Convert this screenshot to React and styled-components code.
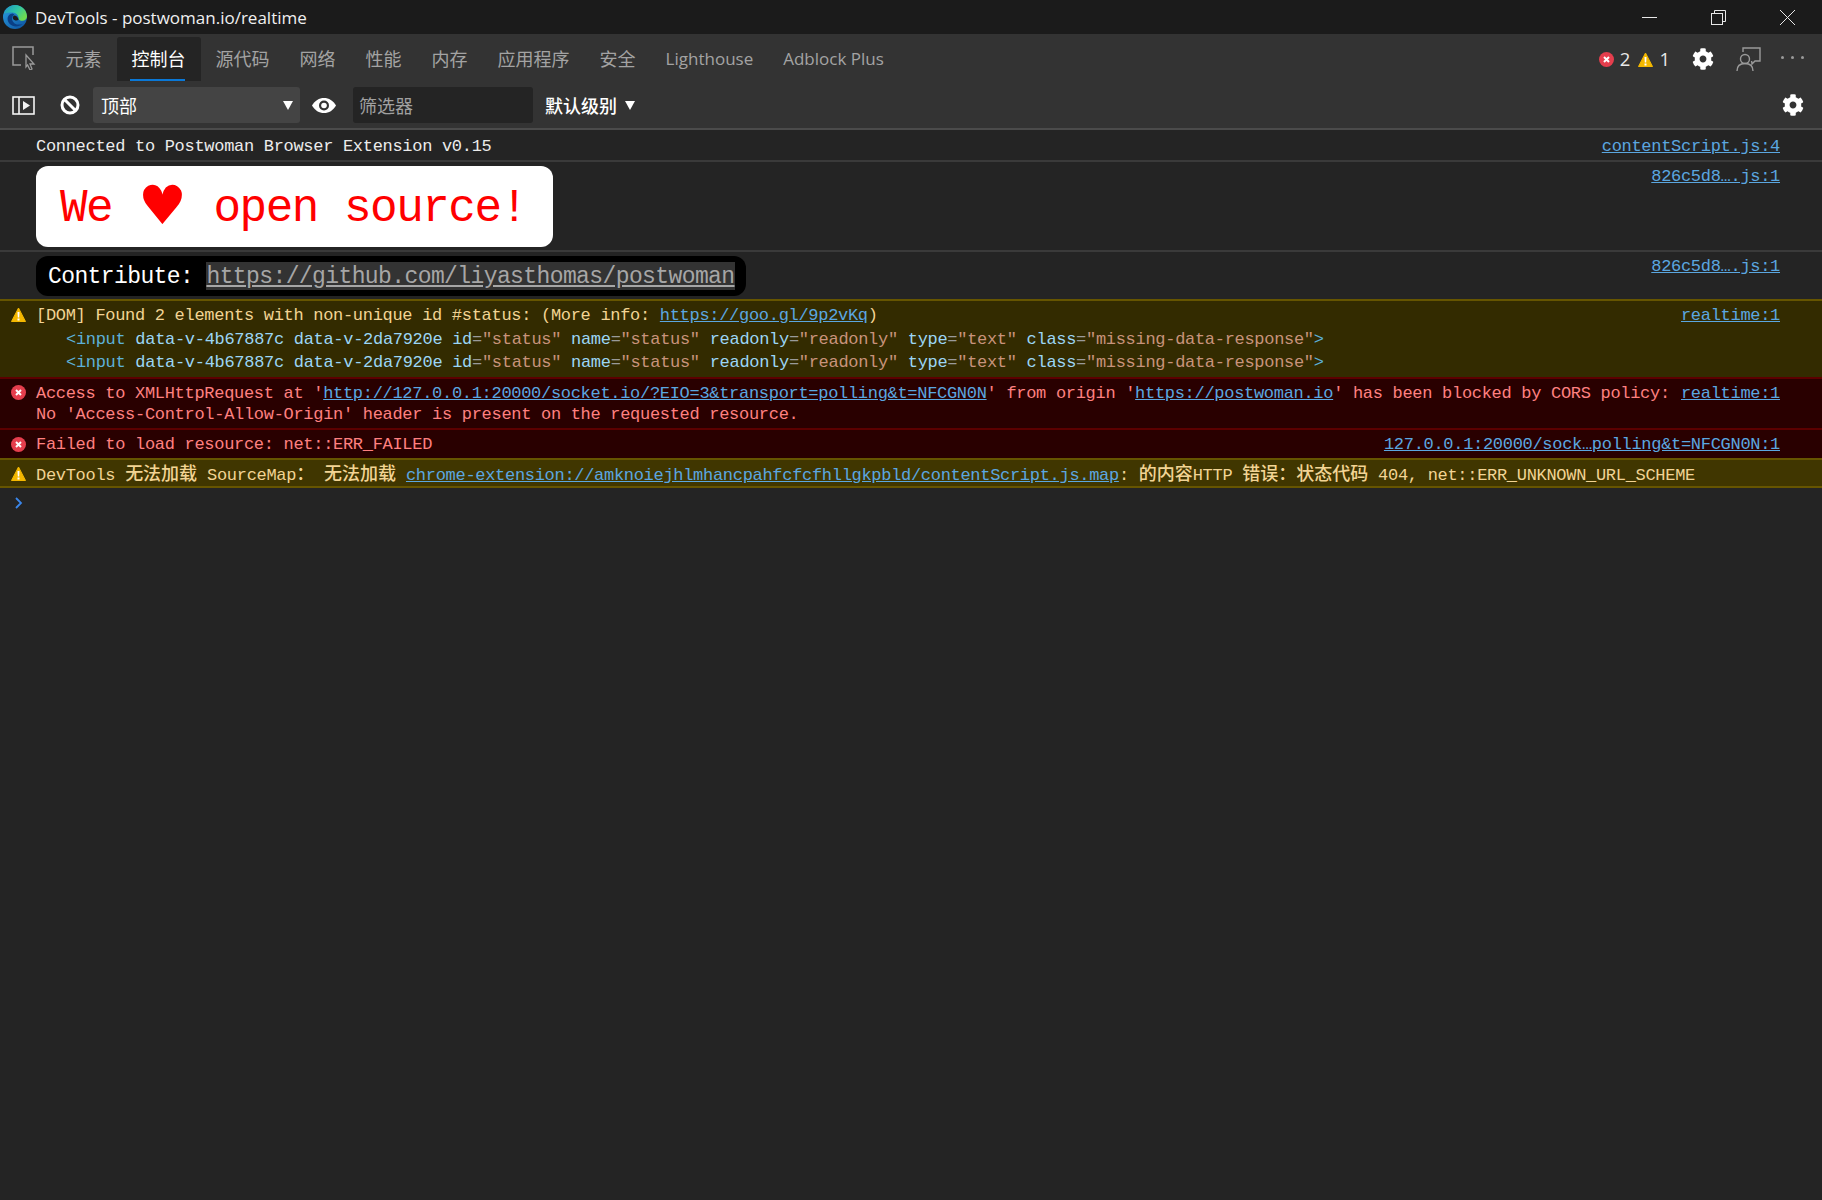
import React from "react"
import styled, { createGlobalStyle } from "styled-components"
import { FaCog } from "react-icons/fa"

const GlobalStyle = createGlobalStyle`
  html, body {
    margin: 0;
    padding: 0;
    background: #242424;
  }
  * {
    box-sizing: border-box;
  }
`

const uiFont = `"Open Sans", "Noto Sans CJK SC", sans-serif`
const monoFont = `"Liberation Mono", "Noto Sans CJK SC", monospace`

const Page = styled.div`
  width: 1822px;
  height: 1200px;
  background: #242424;
  font-family: ${uiFont};
  overflow: hidden;
`

const TitleBar = styled.header`
  height: 34px;
  background: #1b1b1b;
  display: flex;
  align-items: center;
  color: #f0f0f0;
  font-size: 17px;
  padding-left: 3px;
`
const TitleText = styled.span`
  margin-left: 8px;
`
const WindowButtons = styled.div`
  margin-left: auto;
  display: flex;
  align-items: center;
  gap: 54px;
  padding-right: 27px;
  svg {
    display: block;
  }
`

const TabBar = styled.nav`
  height: 48px;
  background: #333333;
  display: flex;
  align-items: flex-start;
  padding: 3px 18px 0 12px;
`
const InspectSlot = styled.div`
  width: 38.6px;
  height: 42px;
  display: flex;
  align-items: center;
`
const Tab = styled.div`
  height: 44px;
  padding: 0 15px 2px;
  display: flex;
  align-items: center;
  position: relative;
  font-size: ${p => (p.$latin ? 17 : 18)}px;
  color: ${p => (p.$active ? "#ffffff" : "#a3a3a3")};
  background: ${p => (p.$active ? "#242424" : "transparent")};
  border-radius: 3px 3px 0 0;
  ${p =>
    p.$active &&
    `&::after {
      content: "";
      position: absolute;
      left: 13px;
      right: 16px;
      bottom: 0;
      height: 2px;
      background: #0a78d7;
    }`}
`
const StatusArea = styled.div`
  margin-left: auto;
  height: 44px;
  display: flex;
  align-items: center;
`
const Count = styled.span`
  color: #e8e8e8;
  font-size: 18.5px;
  margin: 0 8px 0 6px;
  line-height: 1;
`
const Gear = styled(FaCog)`
  color: #ffffff;
  width: 22px;
  height: 22px;
  display: block;
`
const TabGear = styled(Gear)`
  margin-left: 14px;
`
const FeedbackSlot = styled.div`
  margin-left: 22px;
  display: flex;
`
const Dots = styled.div`
  margin-left: 20px;
  width: 23px;
  display: flex;
  justify-content: space-between;
  padding-bottom: 4px;
  span {
    width: 3px;
    height: 3px;
    border-radius: 50%;
    background: #9a9a9a;
  }
`

const Toolbar = styled.div`
  height: 46px;
  background: #333333;
  display: flex;
  align-items: center;
  padding: 0 18px 0 12px;
`
const ToolIcon = styled.div`
  display: flex;
  margin-left: ${p => p.$left || 0}px;
  svg {
    display: block;
  }
`
const Select = styled.div`
  width: 207px;
  height: 36px;
  margin-left: 13px;
  background: #444444;
  border-radius: 3px;
  display: flex;
  align-items: center;
  justify-content: space-between;
  padding: 0 7px 0 8px;
  color: #ffffff;
  font-size: 18px;
`
const Arrow = styled.i`
  display: block;
  width: 0;
  height: 0;
  border-left: 5px solid transparent;
  border-right: 5px solid transparent;
  border-top: 9px solid #ffffff;
`
const Filter = styled.div`
  width: 180px;
  height: 36px;
  margin-left: 17px;
  background: #242424;
  border-radius: 3px;
  display: flex;
  align-items: center;
  padding-left: 6px;
  color: #a0a0a0;
  font-size: 18px;
`
const Level = styled.div`
  margin-left: 12px;
  display: flex;
  align-items: center;
  gap: 8px;
  color: #ffffff;
  font-size: 18px;
  font-weight: 500;
`
const ToolGear = styled(Gear)`
  margin-left: auto;
`
const Divider = styled.div`
  height: 2px;
  background: #4b4b4b;
`

const Messages = styled.main`
  font-family: ${monoFont};
  font-size: 17px;
  letter-spacing: -0.3px;
  line-height: 21px;
  color: #f0f0f0;
`

const rowTones = {
  plain: { bg: "transparent", border: "#3a3a3a", text: "#ececec" },
  warn: { bg: "#332b00", border: "#665500", text: "#f2d494" },
  warnLight: { bg: "#403600", border: "#665500", text: "#f2d494" },
  error: { bg: "#290000", border: "#5c0000", text: "#ff8080" },
}

const Row = styled.div`
  display: flex;
  position: relative;
  padding: ${p => p.$pad || "4px 42px 3px 36px"};
  background: ${p => rowTones[p.$tone || "plain"].bg};
  color: ${p => rowTones[p.$tone || "plain"].text};
  border-top: ${p =>
    p.$noTop ? "0" : `2px solid ${rowTones[p.$tone || "plain"].border}`};
  border-bottom: ${p =>
    p.$last ? `2px solid ${rowTones[p.$tone || "plain"].border}` : "0"};
`
const RowIcon = styled.div`
  position: absolute;
  left: 11px;
  top: ${p => p.$top || 7}px;
  display: flex;
`
const Body = styled.div`
  flex: 1;
  min-width: 0;
  white-space: pre;
`
const Line = styled.div`
  line-height: ${p => p.$height || 21}px;
  padding-left: ${p => p.$indent || 0}px;
  height: ${p => p.$height || 21}px;
  margin-bottom: ${p => p.$after || 0}px;
`
const Source = styled.a`
  color: #5ba7e0;
  text-decoration: underline;
  white-space: pre;
  line-height: ${p => p.$height || 21}px;
`
const LinkText = styled.a`
  color: #5ba7e0;
  text-decoration: underline;
`
const Cjk = styled.span`
  font-size: 18px;
  font-family: "Noto Sans CJK SC", sans-serif;
  font-weight: 500;
  letter-spacing: 0;
  line-height: 1;
`
const Tag = styled.span`
  color: #5db0d7;
`
const Attr = styled.span`
  color: #9bd6f5;
`
const Eq = styled.span`
  color: #9a9a9a;
`
const Val = styled.span`
  color: #c8937b;
`

const Banner = styled.div`
  display: inline-flex;
  align-items: center;
  height: 81px;
  width: 517px;
  padding: 4px 0 0 24px;
  background: #ffffff;
  border-radius: 12px;
  color: #ff0000;
  font-size: 46px;
  letter-spacing: -1.5px;
  line-height: 1;
  white-space: pre;
`
const Heart = styled.span`
  display: inline-block;
  width: 49px;
  font-family: "DejaVu Sans", sans-serif;
  font-size: 54px;
  line-height: 1;
  letter-spacing: 0;
  text-align: left;
  position: relative;
  top: -3px;
`
const Contribute = styled.div`
  display: inline-flex;
  align-items: flex-start;
  height: 40px;
  padding: 6px 11px 0 12px;
  background: #000000;
  border-radius: 12px;
  color: #ffffff;
  font-size: 23px;
  line-height: 31px;
  letter-spacing: -0.6px;
  white-space: pre;
`
const ContributeLink = styled.a`
  height: 28px;
  background: #333333;
  color: #a6a6a6;
  text-decoration: underline;
`
const Prompt = styled.div`
  padding: 9px 0 0 14px;
  svg {
    display: block;
  }
`

const EdgeLogo = () => (
  <svg width="24" height="24" viewBox="0 0 24 24">
    <defs>
      <linearGradient id="edgeTop" x1="0" y1="0" x2="1" y2="0.6">
        <stop offset="0" stopColor="#1b8fc8" />
        <stop offset="0.55" stopColor="#30c5a5" />
        <stop offset="1" stopColor="#6fdb4f" />
      </linearGradient>
      <linearGradient id="edgeLow" x1="0" y1="0" x2="1" y2="1">
        <stop offset="0" stopColor="#2b9fe0" />
        <stop offset="1" stopColor="#0b4f9e" />
      </linearGradient>
    </defs>
    <circle cx="12" cy="12" r="12" fill="url(#edgeLow)" />
    <path
      d="M1 9C2.6 3.6 7 0 12 0c6.6 0 12 5.2 12 11.6 0 2.6-2 4.2-4.6 4.2-2 0-3.6-.8-3.6-1.8 0-3-2.6-6.4-6.2-6.4C6 7.6 3 7.6 1 9z"
      fill="url(#edgeTop)"
    />
    <path
      d="M9.6 8.6c-3 .2-5 2.6-5 5.4 0 4 3.6 7.4 8.4 7.4 2.4 0 4.6-.8 6.4-2.2-1 .2-5 1-7.8-.8-2.6-1.6-3.2-4.8-2-6.8.4-.8 1-1.6 1.8-2.2z"
      fill="#0a3f86"
    />
    <path d="M11 10.5c2 0 4 1.5 4.6 4.2-1.5 1.5-4.8.8-5.6-1-.5-1.2 0-2.5 1-3.2z" fill="#1b1b1b" />
  </svg>
)

const MinimizeIcon = () => (
  <svg width="15" height="15" viewBox="0 0 15 15">
    <path d="M0 7.5h15" stroke="#e8e8e8" strokeWidth="1" />
  </svg>
)
const RestoreIcon = () => (
  <svg width="15" height="15" viewBox="0 0 15 15" fill="none" stroke="#e8e8e8" strokeWidth="1">
    <rect x="0.5" y="3.5" width="11" height="11" />
    <path d="M3.5 3.5v-3h11v11h-3" />
  </svg>
)
const CloseIcon = () => (
  <svg width="15" height="15" viewBox="0 0 15 15">
    <path d="M0 0l15 15M15 0L0 15" stroke="#e8e8e8" strokeWidth="1" />
  </svg>
)

const InspectIcon = () => (
  <svg width="24" height="24" viewBox="0 0 24 24" fill="none">
    <path d="M9 19H1V1h20v8" stroke="#9a9a9a" strokeWidth="1.5" />
    <path d="M14 9l8 9h-4l2 5-2 1-2.4-5-1.6 2z" fill="#333333" stroke="#9a9a9a" strokeWidth="1.3" />
  </svg>
)

const ErrorIcon = ({ size = 15 }) => (
  <svg width={size} height={size} viewBox="0 0 15 15">
    <circle cx="7.5" cy="7.5" r="7.5" fill="#e53e4d" />
    <path d="M5 5l5 5M10 5l-5 5" stroke="#ffffff" strokeWidth="2" />
  </svg>
)
const WarnIcon = ({ size = 15 }) => (
  <svg width={size} height={size} viewBox="0 0 15 15">
    <path d="M7.5 1L14.5 14.5H.5z" fill="#f4b800" stroke="#f4b800" strokeLinejoin="round" />
    <path d="M6.5 5h2l-.3 5.5h-1.4zM6.5 11.5h2V13.5h-2z" fill="#ffffff" />
  </svg>
)

const FeedbackIcon = () => (
  <svg width="25" height="25" viewBox="0 0 25 25" fill="none" stroke="#9a9a9a" strokeWidth="1.4">
    <path d="M7 5V1h17v13h-5l-3 3-.4-3" />
    <circle cx="9" cy="12" r="4.5" />
    <path d="M1 24c0-5 3-7.5 8-7.5s8 2.5 8 7.5" />
  </svg>
)

const SidebarIcon = () => (
  <svg width="23" height="19" viewBox="0 0 23 19" fill="none">
    <rect x="1" y="1" width="21" height="17" stroke="#f4f4f4" strokeWidth="1.6" />
    <path d="M7 1v17" stroke="#f4f4f4" strokeWidth="1.6" />
    <path d="M11 5l7 4.5-7 4.5z" fill="#f4f4f4" />
  </svg>
)
const BlockIcon = () => (
  <svg width="20" height="20" viewBox="0 0 20 20" fill="none" stroke="#ffffff" strokeWidth="3">
    <circle cx="10" cy="10" r="8" />
    <path d="M4.5 4.5l11 11" />
  </svg>
)
const EyeIcon = () => (
  <svg width="24" height="15" viewBox="0 0 24 15">
    <path d="M0 7.5C3 2.5 7 0 12 0s9 2.5 12 7.5C21 12.5 17 15 12 15S3 12.5 0 7.5z" fill="#ffffff" />
    <circle cx="12" cy="7.5" r="5" fill="#333333" />
    <circle cx="12" cy="7.5" r="2.8" fill="#ffffff" />
  </svg>
)
const ChevronIcon = () => (
  <svg width="9" height="12" viewBox="0 0 9 12" fill="none">
    <path d="M2 1l5 5-5 5" stroke="#3a86ea" strokeWidth="1.8" />
  </svg>
)

const tabs = ["元素", "控制台", "源代码", "网络", "性能", "内存", "应用程序", "安全", "Lighthouse", "Adblock Plus"]

const InputLine = () => (
  <Line $height={23} $indent={30}>
    <Tag>&lt;input</Tag> <Attr>data-v-4b67887c</Attr> <Attr>data-v-2da7920e</Attr> <Attr>id</Attr>
    <Eq>=</Eq>
    <Val>"status"</Val> <Attr>name</Attr>
    <Eq>=</Eq>
    <Val>"status"</Val> <Attr>readonly</Attr>
    <Eq>=</Eq>
    <Val>"readonly"</Val> <Attr>type</Attr>
    <Eq>=</Eq>
    <Val>"text"</Val> <Attr>class</Attr>
    <Eq>=</Eq>
    <Val>"missing-data-response"</Val>
    <Tag>&gt;</Tag>
  </Line>
)

const App = () => (
  <Page>
    <GlobalStyle />
    <TitleBar>
      <EdgeLogo />
      <TitleText>DevTools - postwoman.io/realtime</TitleText>
      <WindowButtons>
        <MinimizeIcon />
        <RestoreIcon />
        <CloseIcon />
      </WindowButtons>
    </TitleBar>

    <TabBar>
      <InspectSlot>
        <InspectIcon />
      </InspectSlot>
      {tabs.map(t => (
        <Tab key={t} $active={t === "控制台"} $latin={/^[A-Z]/.test(t)}>
          {t}
        </Tab>
      ))}
      <StatusArea>
        <ErrorIcon />
        <Count>2</Count>
        <WarnIcon />
        <Count>1</Count>
        <TabGear />
        <FeedbackSlot>
          <FeedbackIcon />
        </FeedbackSlot>
        <Dots>
          <span />
          <span />
          <span />
        </Dots>
      </StatusArea>
    </TabBar>

    <Toolbar>
      <ToolIcon>
        <SidebarIcon />
      </ToolIcon>
      <ToolIcon $left={25}>
        <BlockIcon />
      </ToolIcon>
      <Select>
        顶部
        <Arrow />
      </Select>
      <ToolIcon $left={12}>
        <EyeIcon />
      </ToolIcon>
      <Filter>筛选器</Filter>
      <Level>
        默认级别
        <Arrow />
      </Level>
      <ToolGear />
    </Toolbar>
    <Divider />

    <Messages>
      <Row $noTop $pad="6px 42px 3px 36px">
        <Body>Connected to Postwoman Browser Extension v0.15</Body>
        <Source>contentScript.js:4</Source>
      </Row>
      <Row>
        <Body>
          <Banner>
            We <Heart>♥</Heart> open source!
          </Banner>
        </Body>
        <Source>826c5d8….js:1</Source>
      </Row>
      <Row>
        <Body>
          <Contribute>
            Contribute: <ContributeLink>https://github.com/liyasthomas/postwoman</ContributeLink>
          </Contribute>
        </Body>
        <Source>826c5d8….js:1</Source>
      </Row>
      <Row $tone="warn">
        <RowIcon $top={6}>
          <WarnIcon />
        </RowIcon>
        <Body>
          <Line $height={22} $after={1}>
            [DOM] Found 2 elements with non-unique id #status: (More info:{" "}
            <LinkText>https://goo.gl/9p2vKq</LinkText>)
          </Line>
          <InputLine />
          <InputLine />
        </Body>
        <Source $height={22}>realtime:1</Source>
      </Row>
      <Row $tone="error">
        <RowIcon $top={6}>
          <ErrorIcon />
        </RowIcon>
        <Body>
          <Line>
            Access to XMLHttpRequest at '
            <LinkText>http://127.0.0.1:20000/socket.io/?EIO=3&amp;transport=polling&amp;t=NFCGN0N</LinkText>
            ' from origin '<LinkText>https://postwoman.io</LinkText>' has been blocked by CORS policy:
          </Line>
          <Line>No 'Access-Control-Allow-Origin' header is present on the requested resource.</Line>
        </Body>
        <Source>realtime:1</Source>
      </Row>
      <Row $tone="error">
        <RowIcon>
          <ErrorIcon />
        </RowIcon>
        <Body>Failed to load resource: net::ERR_FAILED</Body>
        <Source>127.0.0.1:20000/sock…polling&amp;t=NFCGN0N:1</Source>
      </Row>
      <Row $tone="warnLight" $last $pad="3px 42px 2px 36px">
        <RowIcon $top={6}>
          <WarnIcon />
        </RowIcon>
        <Body>
          <Line>
            DevTools <Cjk>无法加载</Cjk> SourceMap<Cjk>：</Cjk> <Cjk>无法加载</Cjk>{" "}
            <LinkText>chrome-extension://amknoiejhlmhancpahfcfcfhllgkpbld/contentScript.js.map</LinkText>:{" "}
            <Cjk>的内容</Cjk>HTTP <Cjk>错误：状态代码</Cjk> 404, net::ERR_UNKNOWN_URL_SCHEME
          </Line>
        </Body>
      </Row>
      <Prompt>
        <ChevronIcon />
      </Prompt>
    </Messages>
  </Page>
)

export default App
